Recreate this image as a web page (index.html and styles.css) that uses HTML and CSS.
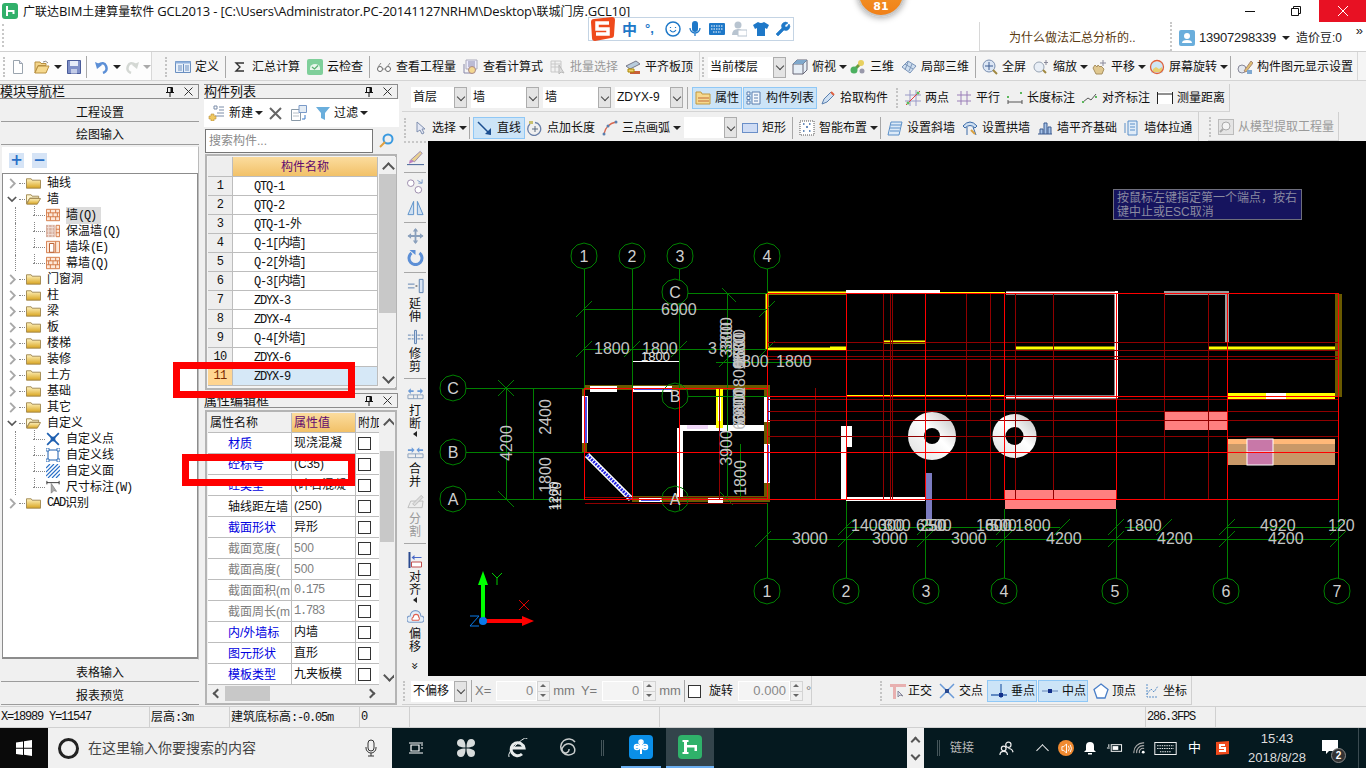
FILE: index.html
```html
<!DOCTYPE html>
<html lang="zh">
<head>
<meta charset="utf-8">
<title>广联达BIM土建算量软件 GCL2013</title>
<link rel="stylesheet" href="styles.css">
</head>
<body>
<svg class="sprite" width="0" height="0">
  <defs>
    <linearGradient id="fold" x1="0" y1="0" x2="0" y2="1"><stop offset="0" stop-color="#fff3c0"/><stop offset="1" stop-color="#d9a520"/></linearGradient>
    <linearGradient id="dn" x1="1" y1="0" x2="0" y2="1"><stop offset="0" stop-color="#bbb"/><stop offset=".45" stop-color="#fff"/><stop offset="1" stop-color="#ddd"/></linearGradient>
    <symbol id="chev" viewBox="0 0 10 12"><path d="M3 1l5 5-5 5" fill="none" stroke="#a8a8a8" stroke-width="2"/></symbol>
    <symbol id="chevd" viewBox="0 0 12 10"><path d="M1 2l5 5 5-5" fill="none" stroke="#555" stroke-width="2"/></symbol>
    <symbol id="folder" viewBox="0 0 16 12"><path d="M.5 1.5h5l1 1.5h9v8.500H.5z" fill="url(#fold)" stroke="#a08850"/></symbol>
    <symbol id="foldero" viewBox="0 0 16 12"><path d="M.5 1.500h5l1 1.500h7v2H4L.5 11z" fill="#fff6d0" stroke="#a08850"/><path d="M4 5.500h11.500L12 11.500H.8z" fill="url(#fold)" stroke="#a08850"/></symbol>
    <symbol id="brick" viewBox="0 0 16 14"><path d="M.5.500h15v13H.5z" fill="#fde8d8" stroke="#d0703a"/><path d="M1 4.500h14M1 9h14M5 1v3.500M11 1v3.500M8 4.500V9M3 4.500V9M13 4.500V9M5 9v4M11 9v4" stroke="#d0703a" fill="none"/></symbol>
    <symbol id="insul" viewBox="0 0 16 14"><path d="M0 0h10v14H0z" fill="#d8b0a0"/><path d="M1 3h8M1 7h8M1 11h8M3 0v14M7 0v14" stroke="#f0e0d8"/><path d="M11.500.500h4v13h-4zM11.500 5h4M11.500 9h4" stroke="#d0703a" fill="#fde8d8"/></symbol>
    <symbol id="pier" viewBox="0 0 16 14"><path d="M.5.500h15v13H.5z" fill="#fde8d8" stroke="#d0703a"/><path d="M4 3h5v10H4z" fill="#fff" stroke="#b05020"/><path d="M11 1v12" stroke="#d0703a"/></symbol>
    <symbol id="cpoint" viewBox="0 0 12 12"><path d="M1 1l10 10M11 1L1 11" stroke="#1d5fb0" stroke-width="1.500"/><rect x="4" y="4" width="4" height="4" fill="#1d5fb0"/></symbol>
    <symbol id="cline" viewBox="0 0 14 14"><path d="M2 2h10v10H2z" fill="none" stroke="#1d5fb0"/><path d="M0 0h3v3H0zM11 0h3v3h-3zM0 11h3v3H0zM11 11h3v3h-3z" fill="#fff" stroke="#1d5fb0" stroke-width=".8"/></symbol>
    <symbol id="cface" viewBox="0 0 14 14"><path d="M0 4l4-4M0 8l8-8M0 12L12 0M2 14L14 2M6 14l8-8M10 14l4-4" stroke="#2a70c8" stroke-width="1.200"/></symbol>
    <symbol id="cdim" viewBox="0 0 16 16"><path d="M1 1v4M15 1v4M1 3h14" stroke="#222"/><path d="M6 4v11l3-3 3 1z" fill="#aaa" stroke="#888"/></symbol>
    <symbol id="new" viewBox="0 0 16 16"><path d="M3.500 1.500h6l3 3v10h-9z" fill="#fff" stroke="#9aa4ae"/><path d="M9.500 1.500v3h3" fill="#dde" stroke="#9aa4ae"/></symbol>
    <symbol id="newc" viewBox="0 0 16 16"><path d="M6 1h3v3H6zM11 2h5M11 5h5M9 8h7M7 11h9" fill="none" stroke="#7a8ca8"/><path d="M3 9h3v2h2v3H6v2H3v-2H1v-3h2z" fill="#f0c860" stroke="#b89040" stroke-width=".6"/></symbol>
    <symbol id="copy" viewBox="0 0 16 16"><path d="M.5 4.500h9v11h-9z" fill="#fff" stroke="#8a9aa8"/><path d="M2 8h6M2 11h6" stroke="#b8c0c8"/><path d="M8 .5h7.500v7H8z" fill="#e4ecf4" stroke="#7a9ac8"/><path d="M14 10v4h-3" fill="none" stroke="#3a7ac8"/></symbol>
    <symbol id="open" viewBox="0 0 16 16"><path d="M1 3h5l1 1.500h5v2H4L1 14z" fill="#f3d48a" stroke="#b89040"/><path d="M4 7h11l-3 7H1z" fill="#f6d98e" stroke="#b89040"/><path d="M9 3q3-2 5 1" fill="none" stroke="#8a8a8a"/></symbol>
    <symbol id="save" viewBox="0 0 16 16"><path d="M1.500 1.500h13v13h-13z" fill="#7f90c8" stroke="#4a5c9a"/><path d="M4 2h8v5H4z" fill="#e6ecf8"/><path d="M5 10h6v4.500H5z" fill="#c4cde8"/></symbol>
    <symbol id="undo" viewBox="0 0 14 14"><path d="M3 5q6-4 8 1t-3 7" fill="none" stroke="#5c8fd6" stroke-width="2.500"/><path d="M0 2l2 7 5-4z" fill="#5c8fd6"/></symbol>
    <symbol id="redo" viewBox="0 0 14 14"><path d="M11 5Q5 1 3 6t3 7" fill="none" stroke="#d4d8d4" stroke-width="2.500"/><path d="M14 2l-2 7-5-4z" fill="#d4d8d4"/></symbol>
    <symbol id="def" viewBox="0 0 16 14"><path d="M.5 1.500h15v11H.5z" fill="#e8f0fa" stroke="#6a8fc0"/><path d="M.5 1.500h15v2H.5z" fill="#8fb0dc"/><path d="M3 6h4M3 8h4M3 10h4M10 6h4M10 8h4M10 10h4M8.500 4v8" stroke="#6a8fc0"/></symbol>
    <symbol id="sigma" viewBox="-2 -2 16 16"><path d="M10 2H2l4 4-4 4h8" fill="none" stroke="#333" stroke-width="1.400"/></symbol>
    <symbol id="cloud" viewBox="0 0 16 16"><rect width="16" height="16" rx="2" fill="#7fcf9a"/><path d="M3 9a5 4 0 0 1 10 0v2H3z" fill="#e8f6ec"/><path d="M5 8l2.500 2L11 6.500" fill="none" stroke="#5ab070" stroke-width="1.300"/></symbol>
    <symbol id="glasses" viewBox="0 0 16 12"><circle cx="4" cy="8" r="2.500" fill="#fff" stroke="#666"/><circle cx="12" cy="8" r="2.500" fill="#fff" stroke="#666"/><path d="M6 8h4M2 6l3-4M11 6l3-4" stroke="#888" fill="none"/></symbol>
    <symbol id="calc" viewBox="0 0 16 16"><path d="M3 1h11v9H3z" fill="#eef" stroke="#aab"/><path d="M5 3h7M5 5h7M5 7h7M1 5v9h8" stroke="#88a" fill="none"/><circle cx="9" cy="11" r="3.500" fill="#f4d890" stroke="#a88"/></symbol>
    <symbol id="batch" viewBox="0 0 16 16"><path d="M1 2h10v11H1zM1 5h10M1 8h10M5 2v11" fill="#f2f2f2" stroke="#c8c8c8"/><path d="M9 6v9l2-2 3 1z" fill="#ddd" stroke="#bbb"/></symbol>
    <symbol id="flat" viewBox="0 0 16 16"><path d="M1 7l10-5 4 3-10 5z" fill="#b8ccdc" stroke="#778"/><path d="M5 12h10v3H5z" fill="#c8603a"/><path d="M3 10h6v3H3z" fill="#f0d070" stroke="#a80"/></symbol>
    <symbol id="cube" viewBox="0 0 16 16"><path d="M1 5l4-4h10v10l-4 4H1z" fill="#e6eef6" stroke="#667"/><path d="M1 5h10v10M11 5l4-4" fill="none" stroke="#667"/><path d="M1 5l4-4h10l-4 4z" fill="#7fa8cc"/></symbol>
    <symbol id="v3d" viewBox="0 0 16 16"><path d="M2 13L12 3" stroke="#6a9a40" stroke-width="3"/><circle cx="4" cy="11" r="3.500" fill="#4cb060"/><circle cx="11" cy="4" r="3" fill="#e8d060"/><circle cx="12" cy="12" r="2.500" fill="#99a"/></symbol>
    <symbol id="local" viewBox="0 0 16 16"><path d="M1 8l6-6 8 5-6 7z" fill="#cfdff0" stroke="#7a94b8"/><path d="M4 5l8 5M7 3l-3 8M11 5l-3 7" stroke="#7a94b8" fill="none"/></symbol>
    <symbol id="full" viewBox="0 0 16 16"><circle cx="7" cy="7" r="6" fill="#dbe6f5" stroke="#7a8fb0"/><path d="M7 3v8M3 7h8" stroke="#3a5a90"/><path d="M11 11l4 4" stroke="#a08840" stroke-width="2"/></symbol>
    <symbol id="zoom" viewBox="0 0 16 16"><circle cx="6" cy="8" r="5" fill="#e8eef6" stroke="#98a4b4"/><path d="M10 11l3 3" stroke="#a08840" stroke-width="2"/><path d="M13 1v5M11 3.500h4" stroke="#889"/></symbol>
    <symbol id="pan" viewBox="0 0 16 16"><path d="M2 9l2-3 2 2 1-2 2 2 1-1 3 3-2 5H5z" fill="#e0c890" stroke="#a89060"/><path d="M12 1v6M9 4h6" stroke="#889"/></symbol>
    <symbol id="rot" viewBox="0 0 16 16"><path d="M2 3h12v11H2z" fill="#cfe6f4"/><path d="M4 10l3-2 3 2 3-2v5H4z" fill="#e8d070"/><circle cx="8" cy="8" r="6.500" fill="none" stroke="#e0603a" stroke-width="1.300"/></symbol>
    <symbol id="disp" viewBox="0 0 16 16"><circle cx="5" cy="10" r="4" fill="#e4e8ee" stroke="#889"/><path d="M7 12l7-10 2 2-7 9z" fill="#e0c070" stroke="#a87"/><path d="M10 11h5v4h-5z" fill="#7fa8d0"/></symbol>
    <symbol id="attr" viewBox="0 0 16 14"><path d="M1 1h5l1 2h8v10H1z" fill="#f6d98e" stroke="#c09840"/><path d="M3 7h11M3 10h11" stroke="#c06a3a"/></symbol>
    <symbol id="list" viewBox="0 0 16 14"><path d="M1 1h3v3H1zM1 5.500h3v3H1zM1 10h3v3H1z" fill="#fff" stroke="#5a7fae"/><path d="M6 1h8v12H6z" fill="#f4f8fc" stroke="#5a7fae"/><path d="M8 4h4M8 7h4M8 10h4" stroke="#5a7fae"/></symbol>
    <symbol id="pick" viewBox="0 0 16 16"><path d="M2 14l2-5 7-7 3 3-7 7z" fill="#cfe0f2" stroke="#5a7fae"/><path d="M11 2l3 3" stroke="#e06040" stroke-width="2"/></symbol>
    <symbol id="twop" viewBox="0 0 16 16"><path d="M5 0v16M11 0v16M0 5h16M0 11h16" stroke="#9a9ac8"/><path d="M1 15L15 1" stroke="#e04040"/><circle cx="3" cy="13" r="1.500" fill="#5cb85c"/><circle cx="13" cy="3" r="1.500" fill="#5cb85c"/></symbol>
    <symbol id="para" viewBox="0 0 16 16"><path d="M5 1v14M11 1v14M1 5h14M1 11h14" stroke="#9a7fb8"/></symbol>
    <symbol id="ldim" viewBox="0 0 16 14"><path d="M1 13V9M15 13V9M1 11h14" stroke="#555"/><rect x="0" y="5" width="2" height="2" fill="#5cb85c"/><rect x="13" y="1" width="2" height="2" fill="#5cb85c"/></symbol>
    <symbol id="adim" viewBox="0 0 16 14"><path d="M1 11l5-4 3 2 5-6" stroke="#555" fill="none"/><rect x="0" y="10" width="2" height="2" fill="#5cb85c"/><rect x="13" y="5" width="2" height="2" fill="#5cb85c"/></symbol>
    <symbol id="meas" viewBox="0 0 16 14"><path d="M0 1h16v12H0z" fill="#fff"/><path d="M.5 1v12M15.500 1v12M1 3h14" stroke="#222"/></symbol>
    <symbol id="cursor" viewBox="0 0 12 14"><path d="M2 1v10l3-2 2 4 2-1-2-4h3z" fill="#e4e8f4" stroke="#8090b0"/></symbol>
    <symbol id="line" viewBox="0 0 16 16"><path d="M1 2l12 12" stroke="#1d4f90" stroke-width="1.500"/><path d="M14 15V8l-6 6z" fill="#1d4f90"/></symbol>
    <symbol id="ptlen" viewBox="0 0 16 16"><path d="M3 4a6.500 6.500 0 1 0 5-1.500" fill="none" stroke="#6a80a8" stroke-width="1.300"/><path d="M8 6v6M5 9h6" stroke="#5a6a80"/><path d="M2 1h4v3H2z" fill="#c8c070"/></symbol>
    <symbol id="arc" viewBox="0 0 16 16"><path d="M2 14Q4 4 14 2" fill="none" stroke="#d86850" stroke-width="1.300"/><circle cx="2" cy="14" r="1.500" fill="#5a7fae"/><circle cx="6" cy="6" r="1.500" fill="#5a7fae"/><circle cx="14" cy="2" r="1.500" fill="#5a7fae"/></symbol>
    <symbol id="rect" viewBox="0 0 16 12"><rect x=".5" y="1.500" width="15" height="9" fill="#cfdcf4" stroke="#6a8fc8"/></symbol>
    <symbol id="smart" viewBox="0 0 16 16"><path d="M1 1h14v14H1z" fill="#fff" stroke="#555" stroke-dasharray="1 1"/><path d="M4 4h1.500M10 4h1.500M7 7h2M4 11h1.500M10 11h1.500" stroke="#3a6aa8" stroke-width="1.500"/></symbol>
    <symbol id="slope" viewBox="0 0 16 16"><path d="M4 2h11l-3 13H1z" fill="#dceaf8" stroke="#5a8fc8"/><path d="M4 5h10M3 8h10M3 11h9" stroke="#5a8fc8"/></symbol>
    <symbol id="archw" viewBox="0 0 16 16"><path d="M1 6Q8-2 15 6l-2 2Q8 3 3 8z" fill="#cfe0f2" stroke="#3a6aa8"/><path d="M5 7v8M11 7l3 8" stroke="#3a6aa8"/><path d="M9 10l4 4" stroke="#d8a040" stroke-width="2"/></symbol>
    <symbol id="align" viewBox="0 0 16 16"><path d="M1 14h14M3 14V9h3v5M7 14V3h3v11M11 14V7h3v7" fill="#a8c4e8" stroke="#3a5a90"/></symbol>
    <symbol id="pull" viewBox="0 0 16 16"><path d="M4 1h9v14H4z" fill="#e0ecf8" stroke="#5a8fc8"/><path d="M6 4h5M6 7h5M6 10h5M1 3v10" stroke="#5a8fc8"/></symbol>
    <symbol id="model" viewBox="0 0 16 16"><rect x=".5" y=".5" width="15" height="15" fill="#e4e4e4" stroke="#bbb"/><circle cx="8" cy="7" r="4" fill="#f4f4f4" stroke="#aaa"/><path d="M5 10l-3 3" stroke="#aaa" stroke-width="2"/></symbol>
    <symbol id="vbrush" viewBox="0 0 18 16"><path d="M4 10L14 1l2 2-8 9z" fill="#e8d090" stroke="#98a"/><path d="M3 10q3 0 4 2l-5 2z" fill="#c080c0"/><path d="M0 15h18" stroke="#3a5a90"/></symbol>
    <symbol id="vcirc" viewBox="0 0 18 16"><circle cx="4" cy="5" r="3.500" fill="#fff" stroke="#98a"/><circle cx="12" cy="12" r="3.500" fill="#fff" stroke="#98a"/><path d="M11 2l5 3M16 1v4h-4" stroke="#7a9ac8" fill="none"/></symbol>
    <symbol id="vmirror" viewBox="0 0 18 16"><path d="M7 1L1 15h6zM11 1l6 14h-6z" fill="#cfe0f2" stroke="#5a8fc8"/></symbol>
    <symbol id="vmove" viewBox="0 0 18 18"><path d="M9 1v16M1 9h16" stroke="#8aa0bc" stroke-width="2"/><path d="M9 0l3 4H6zM9 18l3-4H6zM0 9l4-3v6zM18 9l-4-3v6z" fill="#8aa0bc"/></symbol>
    <symbol id="vrot" viewBox="0 0 16 16"><path d="M4 3a6.500 6.500 0 1 0 8 0" fill="none" stroke="#5c8fd6" stroke-width="3"/><path d="M2 0h6v5z" fill="#5c8fd6"/></symbol>
    <symbol id="vext" viewBox="0 0 18 14"><path d="M1 5h7M1 9h7" stroke="#5a7fae"/><path d="M9 7h2" stroke="#222"/><path d="M13 0h4v14h-4z" fill="#dbe6f5" stroke="#5a7fae"/></symbol>
    <symbol id="vtrim" viewBox="0 0 18 14"><path d="M1 5h6M1 9h6M11 5h6M11 9h6" stroke="#5a7fae" stroke-dasharray="3 1"/><path d="M8 0h2v14H8z" fill="#dbe6f5" stroke="#5a7fae"/></symbol>
    <symbol id="vbreak" viewBox="0 0 18 14"><path d="M1 5l3-3v2h3v2H4v2zM17 5l-3-3v2h-3v2h3v2z" fill="#6a9ad8"/><path d="M1 9h16v4H1zM7 9v4M11 9v4" fill="none" stroke="#8aa0bc"/></symbol>
    <symbol id="vmerge" viewBox="0 0 18 14"><path d="M8 5L5 2v2H1v2h4v2zM10 5l3-3v2h4v2h-4v2z" fill="#6a9ad8"/><path d="M1 9h16v4H1zM9 9v4" fill="none" stroke="#8aa0bc"/></symbol>
    <symbol id="vsplit" viewBox="0 0 18 16"><path d="M1 14L4 7h13l-1 7z" fill="#eee" stroke="#bbb"/><path d="M6 10L15 1l2 2-9 9z" fill="#ddd" stroke="#bbb"/></symbol>
    <symbol id="valign" viewBox="0 0 16 16"><path d="M1 0h2v16H1z" fill="#2a4a90"/><path d="M4 10h10v5H4z" fill="#fff" stroke="#c05050"/><path d="M14 5H7V3L4 5.500 7 8V6h7z" fill="#4a6ac8"/></symbol>
    <symbol id="voff" viewBox="0 0 16 14"><path d="M3 12a3 3 0 0 1 0-6 5 5 0 0 1 10 0 3 3 0 0 1 0 6z" fill="#e4eef8" stroke="#7a9ac8"/><path d="M5 10a2 2 0 0 1 1-3 2.500 2.500 0 0 1 5 0 2 2 0 0 1 0 3z" fill="#fff" stroke="#e06050"/></symbol>
    <symbol id="ortho" viewBox="0 0 16 16"><path d="M0 1h16v3H6v12H3V4H0z" fill="#e8b0b0"/><path d="M8 8v6l2-2 3 1z" fill="#dde" stroke="#889"/></symbol>
    <symbol id="cross" viewBox="0 0 16 16"><path d="M1 1l14 14M15 1L1 15" stroke="#6a9ad8" stroke-width="1.500"/><rect x="6" y="6" width="4" height="4" fill="#2a4a90"/></symbol>
    <symbol id="perp" viewBox="0 0 16 16"><path d="M0 12h16M10 1v14" stroke="#3a6ab0" stroke-width="1.300"/><rect x="8" y="10" width="4" height="4" fill="#12308a"/></symbol>
    <symbol id="mid" viewBox="0 0 16 16"><path d="M0 8h16" stroke="#7a9ac8" stroke-width="1.300"/><rect x="6" y="6" width="4" height="4" fill="#12308a"/></symbol>
    <symbol id="vert" viewBox="0 0 16 16"><path d="M8 1l7 5.500-3 8.500H4L1 6.500z" fill="#fff" stroke="#4a7fc8" stroke-width="1.300"/></symbol>
    <symbol id="coord" viewBox="0 0 16 16"><path d="M4 1v13h11M4 11l4-5 3 3 4-6" fill="none" stroke="#5a8fc8" stroke-dasharray="2 1"/></symbol>
    <symbol id="pinx" viewBox="0 0 8 10"><path d="M1.500.500h5v5h-5zM0 5.500h8M4 6v4" fill="none" stroke="#111"/><path d="M4.500 1v4h2V1z" fill="#111"/></symbol>
    <symbol id="closex" viewBox="0 0 9 9"><path d="M.5.500l8 8M8.500.500l-8 8" stroke="#333"/></symbol>
  </defs>
</svg>

<header class="titlebar">
  <svg class="applogo" viewBox="0 0 16 16"><rect width="16" height="16" rx="3" fill="#31b06a"/><path d="M4 3h2v10H4zM6 7h6v2H6zM10.500 7h2v4h-2z" fill="#fff"/></svg>
  <span class="title"><span class="cj">广联达</span>BIM<span class="cj">土建算量软件</span> GCL2013 - [C:\Users\Administrator.PC-20141127NRHM\Desktop\<span class="cj">联城门房</span>.GCL10]</span>
  <div class="winbtns">
    <span class="wb"><span class="wmin"></span></span>
    <span class="wb"><svg class="wrest" viewBox="0 0 10 10"><path d="M.5 2.500h7v7h-7zM2.500 2.500v-2h7v7h-2" fill="none" stroke="#111"/></svg></span>
    <span class="wb wclose"><svg class="wrest" viewBox="0 0 10 10"><path d="M0 0l10 10M10 0L0 10" stroke="#fff"/></svg></span>
  </div>
</header>

<div class="menurow">
  <div class="menugrip"></div>
  <div class="newsbox">为什么做法汇总分析的..</div>
  <div class="userbox">
    <svg class="avatar" viewBox="0 0 16 16"><rect width="16" height="16" rx="2" fill="#6aaedc"/><circle cx="8" cy="6" r="3" fill="#fff"/><path d="M3 13q0-3 5-3t5 3z" fill="#fff"/></svg>
    <span class="usernum">13907298339</span><span class="caret"></span><span>造价豆:0</span>
    <span class="chevrons">»</span>
  </div>
</div>

<div class="tb1">
  <div class="tb1-a">
    <span class="grip"></span>
    <svg class="i16"><use href="#new"/></svg>
    <svg class="i16 open"><use href="#open"/></svg><span class="caret"></span>
    <svg class="i16"><use href="#save"/></svg>
    <span class="sep"></span>
    <svg class="i14"><use href="#undo"/></svg><span class="caret"></span>
    <svg class="i14"><use href="#redo"/></svg><span class="caret pale"></span>
  </div>
  <div class="tb1-b">
    <span class="grip"></span>
    <span class="ti"><svg class="i16"><use href="#def"/></svg>定义</span><span class="sep"></span>
    <span class="ti"><svg class="i16"><use href="#sigma"/></svg>汇总计算</span>
    <span class="ti"><svg class="i16"><use href="#cloud"/></svg>云检查</span><span class="sep"></span>
    <span class="ti"><svg class="i16"><use href="#glasses"/></svg>查看工程量</span>
    <span class="ti"><svg class="i16"><use href="#calc"/></svg>查看计算式</span>
    <span class="ti off"><svg class="i16"><use href="#batch"/></svg>批量选择</span>
    <span class="ti"><svg class="i16"><use href="#flat"/></svg>平齐板顶</span>
  </div>
  <div class="tb1-c">
    <span class="grip"></span>
    <span class="sel w78"><span class="selv">当前楼层</span><span class="selbtn"><span class="vee"></span></span></span>
    <span class="ti dd"><svg class="i16"><use href="#cube"/></svg>俯视<span class="caret"></span></span>
    <span class="ti"><svg class="i16"><use href="#v3d"/></svg>三维</span>
    <span class="ti"><svg class="i16"><use href="#local"/></svg>局部三维</span><span class="sep"></span>
    <span class="ti"><svg class="i16"><use href="#full"/></svg>全屏</span>
    <span class="ti dd"><svg class="i16"><use href="#zoom"/></svg>缩放<span class="caret"></span></span>
    <span class="ti dd"><svg class="i16"><use href="#pan"/></svg>平移<span class="caret"></span></span>
    <span class="ti dd"><svg class="i16"><use href="#rot"/></svg>屏幕旋转<span class="caret"></span></span><span class="sep"></span>
    <span class="ti"><svg class="i16"><use href="#disp"/></svg>构件图元显示设置</span>
  </div>
</div>

<main class="main">
  <aside class="nav">
    <div class="phead"><span class="ptitle">模块导航栏</span><svg class="pin"><use href="#pinx"/></svg><svg class="pclose"><use href="#closex"/></svg></div>
    <div class="navbtn">工程设置</div>
    <div class="navbtn">绘图输入</div>
    <div class="navbody">
      <div class="pm"><span class="pmb">+</span><span class="pmb">−</span></div>
      <div class="tree">
        <div class="tr"><svg class="chev"><use href="#chev"/></svg><span class="dots"></span><svg class="fld"><use href="#folder"/></svg>轴线</div>
        <div class="tr"><svg class="chev"><use href="#chevd"/></svg><span class="dots"></span><svg class="fld"><use href="#foldero"/></svg>墙</div>
        <div class="tc"><span class="dotsl"></span><svg class="ci"><use href="#brick"/></svg><span class="cellsel">墙<span class="mn">(Q)</span></span></div>
        <div class="tc"><span class="dotsl"></span><svg class="ci"><use href="#insul"/></svg><span>保温墙<span class="mn">(Q)</span></span></div>
        <div class="tc"><span class="dotsl"></span><svg class="ci"><use href="#pier"/></svg><span>墙垛<span class="mn">(E)</span></span></div>
        <div class="tc"><span class="dotsl"></span><svg class="ci"><use href="#brick"/></svg><span>幕墙<span class="mn">(Q)</span></span></div>
        <div class="tr"><svg class="chev"><use href="#chev"/></svg><span class="dots"></span><svg class="fld"><use href="#folder"/></svg>门窗洞</div>
        <div class="tr"><svg class="chev"><use href="#chev"/></svg><span class="dots"></span><svg class="fld"><use href="#folder"/></svg>柱</div>
        <div class="tr"><svg class="chev"><use href="#chev"/></svg><span class="dots"></span><svg class="fld"><use href="#folder"/></svg>梁</div>
        <div class="tr"><svg class="chev"><use href="#chev"/></svg><span class="dots"></span><svg class="fld"><use href="#folder"/></svg>板</div>
        <div class="tr"><svg class="chev"><use href="#chev"/></svg><span class="dots"></span><svg class="fld"><use href="#folder"/></svg>楼梯</div>
        <div class="tr"><svg class="chev"><use href="#chev"/></svg><span class="dots"></span><svg class="fld"><use href="#folder"/></svg>装修</div>
        <div class="tr"><svg class="chev"><use href="#chev"/></svg><span class="dots"></span><svg class="fld"><use href="#folder"/></svg>土方</div>
        <div class="tr"><svg class="chev"><use href="#chev"/></svg><span class="dots"></span><svg class="fld"><use href="#folder"/></svg>基础</div>
        <div class="tr"><svg class="chev"><use href="#chev"/></svg><span class="dots"></span><svg class="fld"><use href="#folder"/></svg>其它</div>
        <div class="tr"><svg class="chev"><use href="#chevd"/></svg><span class="dots"></span><svg class="fld"><use href="#foldero"/></svg>自定义</div>
        <div class="tc"><span class="dotsl"></span><svg class="ci"><use href="#cpoint"/></svg><span>自定义点</span></div>
        <div class="tc"><span class="dotsl"></span><svg class="ci"><use href="#cline"/></svg><span>自定义线</span></div>
        <div class="tc"><span class="dotsl"></span><svg class="ci"><use href="#cface"/></svg><span>自定义面</span></div>
        <div class="tc"><span class="dotsl"></span><svg class="ci"><use href="#cdim"/></svg><span>尺寸标注<span class="mn">(W)</span></span></div>
        <div class="tr"><svg class="chev"><use href="#chev"/></svg><span class="dots"></span><svg class="fld"><use href="#folder"/></svg><span class="mn">CAD</span>识别</div>
      </div>
    </div>
    <div class="navbtn">表格输入</div>
    <div class="navbtn">报表预览</div>
  </aside>

  <section class="side">
    <div class="phead"><span class="ptitle">构件列表</span><svg class="pin"><use href="#pinx"/></svg><svg class="pclose"><use href="#closex"/></svg></div>
    <div class="listbar">
      <svg class="i16"><use href="#newc"/></svg><span class="ltxt">新建</span><span class="caret"></span>
      <svg class="lx" viewBox="0 0 13 13"><path d="M1 1l11 11M12 1L1 12" stroke="#666" stroke-width="2"/></svg>
      <svg class="i16"><use href="#copy"/></svg>
      <svg class="i16 fun" viewBox="0 0 16 16"><path d="M1 2h14L10 8v7l-4-2V8z" fill="#6aaedc"/></svg><span class="ltxt">过滤</span><span class="caret"></span>
    </div>
    <div class="searchrow">
      <div class="search">搜索构件...</div>
      <svg class="sicon" viewBox="0 0 16 16"><circle cx="10" cy="6" r="4.500" fill="none" stroke="#3a9ae0" stroke-width="2"/><path d="M7 9l-5 5" stroke="#e0a040" stroke-width="2"/></svg>
    </div>
    <div class="gridbox lg">
      <div class="gcols">
        <div class="grow ghead"><span class="gnum"></span><span class="gname gh">构件名称</span></div>
        <div class="grow"><span class="gnum">1</span><span class="gname">QTQ-1</span></div>
        <div class="grow"><span class="gnum">2</span><span class="gname">QTQ-2</span></div>
        <div class="grow"><span class="gnum">3</span><span class="gname">QTQ-1-外</span></div>
        <div class="grow"><span class="gnum">4</span><span class="gname">Q-1[内墙]</span></div>
        <div class="grow"><span class="gnum">5</span><span class="gname">Q-2[外墙]</span></div>
        <div class="grow"><span class="gnum">6</span><span class="gname">Q-3[内墙]</span></div>
        <div class="grow"><span class="gnum">7</span><span class="gname">ZDYX-3</span></div>
        <div class="grow"><span class="gnum">8</span><span class="gname">ZDYX-4</span></div>
        <div class="grow"><span class="gnum">9</span><span class="gname">Q-4[外墙]</span></div>
        <div class="grow"><span class="gnum">10</span><span class="gname">ZDYX-6</span></div>
        <div class="grow gsel"><span class="gnum">11</span><span class="gname">ZDYX-9</span></div>
      </div>
      <div class="vscroll vs1"><span class="up"></span><span class="thumb"></span><span class="dn"></span></div>
    </div>
    <div class="phead ph2"><span class="ptitle">属性编辑框</span><svg class="pin"><use href="#pinx"/></svg><svg class="pclose"><use href="#closex"/></svg></div>
    <div class="propbox">
      <div class="proptop">
        <div class="pcols">
          <div class="prow phd"><span class="pn pnh">属性名称</span><span class="pv pvh">属性值</span><span class="pc pch">附加</span></div>
          <div class="prow"><span class="pn bl">材质</span><span class="pv">现浇混凝</span><span class="pc"><i></i></span></div>
          <div class="prow"><span class="pn bl">砼标号</span><span class="pv">(C35)</span><span class="pc"><i></i></span></div>
          <div class="prow"><span class="pn bl">砼类型</span><span class="pv">(碎石混凝</span><span class="pc"><i></i></span></div>
          <div class="prow"><span class="pn">轴线距左墙</span><span class="pv">(250)</span><span class="pc"><i></i></span></div>
          <div class="prow"><span class="pn bl">截面形状</span><span class="pv">异形</span><span class="pc"><i></i></span></div>
          <div class="prow"><span class="pn gy">截面宽度(</span><span class="pv gy">500</span><span class="pc"><i></i></span></div>
          <div class="prow"><span class="pn gy">截面高度(</span><span class="pv gy">500</span><span class="pc"><i></i></span></div>
          <div class="prow"><span class="pn gy">截面面积(m</span><span class="pv gy mono">0.175</span><span class="pc"><i></i></span></div>
          <div class="prow"><span class="pn gy">截面周长(m</span><span class="pv gy mono">1.783</span><span class="pc"><i></i></span></div>
          <div class="prow"><span class="pn bl">内/外墙标</span><span class="pv">内墙</span><span class="pc"><i></i></span></div>
          <div class="prow"><span class="pn bl">图元形状</span><span class="pv">直形</span><span class="pc"><i></i></span></div>
          <div class="prow"><span class="pn bl">模板类型</span><span class="pv">九夹板模</span><span class="pc"><i></i></span></div>
        </div>
        <div class="vscroll vs2"><span class="up"></span><span class="thumb"></span><span class="dn"></span></div>
      </div>
      <div class="hscroll"><span class="lf"></span><span class="hthumb"></span><span class="rt"></span></div>
    </div>
  </section>

  <section class="work">
    <div class="rowtb r2">
      <div class="r2a">
        <span class="sel w56"><span class="selv">首层</span><span class="selbtn"><span class="vee"></span></span></span>
        <span class="sel w68"><span class="selv">墙</span><span class="selbtn"><span class="vee"></span></span></span>
        <span class="sel w68"><span class="selv">墙</span><span class="selbtn"><span class="vee"></span></span></span>
        <span class="sel w68"><span class="selv">ZDYX-9</span><span class="selbtn"><span class="vee"></span></span></span>
        <span class="sep"></span>
        <span class="ti tog t50"><svg class="i16"><use href="#attr"/></svg>属性</span>
        <span class="ti tog t74"><svg class="i16"><use href="#list"/></svg>构件列表</span>
        <span class="ti pk"><svg class="i16"><use href="#pick"/></svg>拾取构件</span>
        <span class="grip gripm"></span>
        <span class="ti"><svg class="i16"><use href="#twop"/></svg>两点</span>
        <span class="ti"><svg class="i16"><use href="#para"/></svg>平行</span>
        <span class="ti"><svg class="i16"><use href="#ldim"/></svg>长度标注</span>
        <span class="ti"><svg class="i16"><use href="#adim"/></svg>对齐标注</span>
        <span class="ti"><svg class="i16"><use href="#meas"/></svg>测量距离</span>
      </div>
    </div>
    <div class="rowtb r3">
      <div class="r3a">
        <span class="grip"></span>
        <span class="ti dd sl"><svg class="i12"><use href="#cursor"/></svg>选择<span class="caret"></span></span><span class="sep"></span>
        <span class="ti tog t52"><svg class="i16"><use href="#line"/></svg>直线</span>
        <span class="ti"><svg class="i16"><use href="#ptlen"/></svg>点加长度</span>
        <span class="ti dd"><svg class="i16"><use href="#arc"/></svg>三点画弧<span class="caret"></span></span>
        <span class="sel w53"><span class="selv"></span><span class="selbtn"><span class="vee"></span></span></span>
        <span class="ti"><svg class="i16"><use href="#rect"/></svg>矩形</span><span class="sep"></span>
        <span class="ti dd"><svg class="i16"><use href="#smart"/></svg>智能布置<span class="caret"></span></span><span class="sep"></span>
        <span class="ti"><svg class="i16"><use href="#slope"/></svg>设置斜墙</span>
        <span class="ti"><svg class="i16"><use href="#archw"/></svg>设置拱墙</span>
        <span class="ti"><svg class="i16"><use href="#align"/></svg>墙平齐基础</span>
        <span class="ti"><svg class="i16"><use href="#pull"/></svg>墙体拉通</span>
      </div>
      <div class="r3b">
        <span class="grip"></span>
        <span class="ti off"><svg class="i16"><use href="#model"/></svg>从模型提取工程量</span>
      </div>
    </div>

    <div class="stage">
      <div class="vbar">
        <span class="vgrip"></span>
        <span class="vi"><svg class="iv"><use href="#vbrush"/></svg></span><span class="vsep"></span>
        <span class="vi"><svg class="iv"><use href="#vcirc"/></svg></span>
        <span class="vi"><svg class="iv"><use href="#vmirror"/></svg></span><span class="vsep"></span>
        <span class="vi"><svg class="iv"><use href="#vmove"/></svg></span>
        <span class="vi"><svg class="iv"><use href="#vrot"/></svg></span><span class="vsep"></span>
        <span class="vi"><svg class="iv"><use href="#vext"/></svg></span><span class="vt">延<br>伸</span>
        <span class="vi v20 m3"><svg class="iv"><use href="#vtrim"/></svg></span><span class="vt">修<br>剪</span><span class="vsep s8"></span>
        <span class="vi"><svg class="iv"><use href="#vbreak"/></svg></span><span class="vt">打<br>断</span><span class="varrow"></span>
        <span class="vi v20 m5"><svg class="iv"><use href="#vmerge"/></svg></span><span class="vt">合<br>并</span>
        <span class="vi v20 m3"><svg class="iv"><use href="#vsplit"/></svg></span><span class="vt off">分<br>割</span><span class="vsep s8"></span>
        <span class="vi v20 m3"><svg class="iv"><use href="#valign"/></svg></span><span class="vt">对<br>齐</span><span class="varrow"></span>
        <span class="vi v20 m4"><svg class="iv"><use href="#voff"/></svg></span><span class="vt">偏<br>移</span>
        <span class="vmore">»</span>
      </div>
      <svg class="cad" viewBox="428 141 938 535">
        <!-- fills -->
        <rect class="f-pk" x="1005" y="490" width="111" height="19"/>
        <rect class="f-pk" x="1164" y="412" width="63" height="18"/>
        <rect class="f-tan" x="1227" y="439" width="108" height="26"/>
        <rect class="f-or" x="1227" y="439" width="108" height="5"/>
        <rect class="f-pu" x="1247" y="439" width="26" height="26"/>
        <path class="w1" d="M1247 452h27"/>
        <rect class="f-bl" x="926" y="473" width="6" height="47"/>
        <circle cx="932" cy="436" r="24" fill="url(#dn)"/><circle cx="932" cy="436" r="8"/>
        <circle cx="1014.500" cy="436" r="22" fill="url(#dn)"/><circle cx="1014.500" cy="436" r="9"/>
        <!-- walls -->
        <path class="yel" d="M767 293V349M767 293H846M767 349H846M830 348H846M1015 348H1116M1208 348H1335M884 342H925"/>
        <path class="yt" d="M846 396H1005M940 293H1005"/>
        <rect class="f-w" x="846" y="290" width="94" height="4"/>
        <path class="wt" d="M1006 293H1116V397H1006"/>
        <rect class="f-w" x="1115" y="291" width="3" height="107"/>
        <path class="gr" d="M1164 293H1227V342"/>
        <rect class="f-ol" x="1335" y="294" width="7" height="103"/>
        <rect class="f-y" x="1227" y="393" width="108" height="6"/>
        <rect class="f-w" x="1266" y="393" width="20" height="6"/>
        <rect class="f-w" x="841" y="426" width="5" height="73"/>
        <rect class="f-w" x="846" y="426" width="6" height="21"/>
        <rect class="f-w" x="846" y="497" width="79" height="4"/>
        <rect class="f-ol" x="584" y="385" width="186" height="5"/>
        <rect class="f-ol" x="582" y="388" width="3" height="8"/>
        <rect class="f-ol" x="582" y="443" width="5" height="10"/>
        <rect class="f-ol" x="632" y="496" width="138" height="6"/>
        <rect class="f-ol" x="764" y="388" width="6" height="114"/>
        <rect class="f-w" x="590" y="386" width="27" height="6"/>
        <rect class="f-w" x="633" y="386" width="39" height="6"/>
        <rect class="f-w" x="582" y="396" width="6" height="47"/>
        <rect class="f-w" x="764" y="396" width="6" height="26"/>
        <rect class="f-w" x="764" y="444" width="6" height="39"/>
        <rect class="f-w" x="639" y="497" width="23" height="5"/>
        <rect class="f-w" x="708" y="497" width="15" height="6"/>
        <rect class="f-w" x="677" y="428" width="6" height="69"/>
        <rect class="f-w" x="680" y="425" width="84" height="6"/>
        <path class="pkl" d="M687 426H708M687 428H708"/>
        <rect class="f-y" x="716" y="389" width="7" height="39"/>
        <rect class="f-w" x="718" y="397" width="3" height="24"/>
        <path class="bluel" d="M634 389H672M586 397V443M768 397V421M768 445V482M641 500H660"/>
        <path class="hatch" d="M587 455L631 499"/>
        <path class="hatchb" d="M587 455L631 499"/>
        <path class="wthin" d="M632 388V361H679V388"/>
        <!-- green -->
        <path class="gl" d="M584 269V388M632 269V388M679 269V510M767 269V388M688 293H767M584 309H767M584 349H767M716 362H810M688 396H767M466 388H584M466 452H584M466 499H632M506 388V499M533 388V499M727 293V499M740 444V499M767 503V578M846 501V578M925 520V578M1004 509V578M1116 509V578M1227 499V578M1338 499V578M767 539H1338M846 527H1060M1125 527H1155M1227 527H1338"/>
        <path class="gl" d="M576 317l16-16M576 357l16-16M624 357l16-16M671 357l16-16M759 317l16-16M759 357l16-16M719 367l16-16M722 288l14 14M498 396l16-16M498 380l16 16M498 491l16 16M719 491l14 14M755 547l16-16M838 547l16-16M917 547l16-16M996 547l16-16M1108 547l16-16M1219 547l16-16M1330 547l16-16M838 535l16-16M917 535l16-16M996 535l16-16M1108 535l16-16M1219 535l16-16M1330 535l16-16M1054 535l16-16M1156 535l16-16"/>
        <!-- grid circles -->
        <polygon class="oct" points="584,243 591,245 596,250 597,256 596,262 591,267 584,269 577,267 572,262 571,256 572,250 577,245"/>
        <polygon class="oct" points="632,243 639,245 644,250 645,256 644,262 639,267 632,269 625,267 620,262 619,256 620,250 625,245"/>
        <polygon class="oct" points="680,243 687,245 692,250 693,256 692,262 687,267 680,269 673,267 668,262 667,256 668,250 673,245"/>
        <polygon class="oct" points="767,243 774,245 779,250 780,256 779,262 774,267 767,269 760,267 755,262 754,256 755,250 760,245"/>
        <polygon class="oct ob" points="675,279 682,281 687,286 688,292 687,298 682,303 675,305 668,303 663,298 662,292 663,286 668,281"/>
        <polygon class="oct" points="675,383 682,385 687,390 688,396 687,402 682,407 675,409 668,407 663,402 662,396 663,390 668,385"/>
        <polygon class="oct" points="675,486 682,488 687,493 688,499 687,505 682,510 675,512 668,510 663,505 662,499 663,493 668,488"/>
        <polygon class="oct" points="453,375 460,377 465,382 466,388 465,394 460,399 453,401 446,399 441,394 440,388 441,382 446,377"/>
        <polygon class="oct" points="453,439 460,441 465,446 466,452 465,458 460,463 453,465 446,463 441,458 440,452 441,446 446,441"/>
        <polygon class="oct" points="453,486 460,488 465,493 466,499 465,505 460,510 453,512 446,510 441,505 440,499 441,493 446,488"/>
        <polygon class="oct" points="767,578 774,580 779,585 780,591 779,597 774,602 767,604 760,602 755,597 754,591 755,585 760,580"/>
        <polygon class="oct" points="846,578 853,580 858,585 859,591 858,597 853,602 846,604 839,602 834,597 833,591 834,585 839,580"/>
        <polygon class="oct" points="926,578 933,580 938,585 939,591 938,597 933,602 926,604 919,602 914,597 913,591 914,585 919,580"/>
        <polygon class="oct" points="1004,578 1011,580 1016,585 1017,591 1016,597 1011,602 1004,604 997,602 992,597 991,591 992,585 997,580"/>
        <polygon class="oct" points="1115,578 1122,580 1127,585 1128,591 1127,597 1122,602 1115,604 1108,602 1103,597 1102,591 1103,585 1108,580"/>
        <polygon class="oct" points="1226,578 1233,580 1238,585 1239,591 1238,597 1233,602 1226,604 1219,602 1214,597 1213,591 1214,585 1219,580"/>
        <polygon class="oct" points="1337,578 1344,580 1349,585 1350,591 1349,597 1344,602 1337,604 1330,602 1325,597 1324,591 1325,585 1330,580"/>
        <!-- dark red & red grid -->
        <path class="dr" d="M883 293V499M890 293V499M892 293V499M966 293V499M990 293V499M1015 293V499M1053 293V499M1164 293V499M1208 293V499M767 342H1338M767 350H1338M767 356H1338M767 359H1338M767 399H1338M767 411H1338M767 420H1338M767 436H1338M719 388V499M815 388V499M584 497H767M585 503H767"/>
        <path class="rd" d="M584 388H767M584 388V499H846M632 388V499M679 388V499M767 293V499M767 293H1338V499H846M846 293V499M925 293V499M1004 293V499M1116 293V499M1227 293V499M767 396H1338M584 452H1338"/>
        <!-- dimensions -->
        <g class="dim">
          <text x="661" y="315">6900</text>
          <text x="594" y="354">1800</text><text x="642" y="354">1800</text>
          <text x="708" y="354">3</text><text x="776" y="367">1800</text>
          <text x="733" y="367">1800</text>
          <text class="dsm" x="641" y="361">1800</text>
          <text transform="rotate(-90 512 443)" x="512" y="443" text-anchor="middle">4200</text>
          <text transform="rotate(-90 551 417)" x="551" y="417" text-anchor="middle">2400</text>
          <text transform="rotate(-90 551 475)" x="551" y="475" text-anchor="middle">1800</text>
          <text class="dsm" transform="rotate(-90 561 496)" x="561" y="496" text-anchor="middle">1120</text>
          <text class="dsm" transform="rotate(-90 558 496)" x="558" y="496" text-anchor="middle">1200</text>
          <text transform="rotate(-90 732 335)" x="732" y="335" text-anchor="middle">3800</text>
          <text transform="rotate(-90 732 340)" x="732" y="340" text-anchor="middle">3300</text>
          <text transform="rotate(-90 745 347)" x="745" y="347" text-anchor="middle">1800</text>
          <text transform="rotate(-90 745 352)" x="745" y="352" text-anchor="middle">1880</text>
          <text transform="rotate(-90 745 350)" x="745" y="350" text-anchor="middle">1600</text>
          <text transform="rotate(-90 745 378)" x="745" y="378" text-anchor="middle">1800</text>
          <text transform="rotate(-90 745 405)" x="745" y="405" text-anchor="middle">6600</text>
          <text transform="rotate(-90 745 408)" x="745" y="408" text-anchor="middle">6900</text>
          <text transform="rotate(-90 745 412)" x="745" y="412" text-anchor="middle">6040</text>
          <text transform="rotate(-90 732 448)" x="732" y="448" text-anchor="middle">3900</text>
          <text transform="rotate(-90 746 478)" x="746" y="478" text-anchor="middle">1800</text>
          <text x="851" y="531">1400</text><text x="878" y="531">300</text><text x="884" y="531">300</text>
          <text x="916" y="531">6500</text><text x="920" y="531">250</text><text x="928" y="531">50</text>
          <text x="976" y="531">1800</text><text x="985" y="531">600</text><text x="990" y="531">500</text>
          <text x="1015" y="531">1800</text>
          <text x="1126" y="531">1800</text>
          <text x="1260" y="531">4920</text>
          <text x="1328" y="531">120</text>
          <text x="792" y="544">3000</text><text x="872" y="544">3000</text><text x="951" y="544">3000</text>
          <text x="1046" y="544">4200</text><text x="1157" y="544">4200</text><text x="1268" y="544">4200</text>
        </g>
        <g class="lab">
          <text x="584" y="262">1</text><text x="632" y="262">2</text><text x="680" y="262">3</text><text x="767" y="262">4</text>
          <text x="675" y="298">C</text><text x="675" y="402">B</text><text x="675" y="505">A</text>
          <text x="453" y="394">C</text><text x="453" y="458">B</text><text x="453" y="505">A</text>
          <text x="767" y="597">1</text><text x="846" y="597">2</text><text x="926" y="597">3</text><text x="1004" y="597">4</text><text x="1115" y="597">5</text><text x="1226" y="597">6</text><text x="1337" y="597">7</text>
        </g>
        <!-- axis -->
        <path class="axy" d="M483 621V580"/><path class="axyf" d="M483 571l5 14h-10z"/>
        <path class="axx" d="M483 621H524"/><path class="axxf" d="M534 621l-12 5v-10z"/>
        <circle class="axo" cx="483" cy="621" r="4"/>
        <path class="ly" d="M492 573l5 5 5-5M497 578v7"/>
        <path class="lx" d="M519 600l10 10M529 600l-10 10"/>
        <path class="lz" d="M470 616h9l-9 10h9"/>
      </svg>
      <div class="tip">按鼠标左键指定第一个端点，按右<br>键中止或ESC取消</div>
    </div>

    <div class="rowtb r4">
      <div class="r4a">
        <span class="grip"></span>
        <span class="sel w56"><span class="selv">不偏移</span><span class="selbtn"><span class="vee"></span></span></span>
        <span class="sep"></span>
        <span class="lbl">X=</span>
        <span class="spin"><span class="inp w41">0</span><span class="spb"><b></b><b></b></span></span>
        <span class="lbl">mm</span><span class="lbl ly2">Y=</span>
        <span class="spin"><span class="inp w41">0</span><span class="spb"><b></b><b></b></span></span>
        <span class="lbl">mm</span>
        <span class="sep"></span>
        <span class="cb"></span><span class="rottxt">旋转</span>
        <span class="spin"><span class="inp w52">0.000</span><span class="spb"><b></b><b></b></span></span>
        <span class="lbl">°</span>
      </div>
      <div class="r4b">
        <span class="grip"></span>
        <span class="ti"><svg class="i16"><use href="#ortho"/></svg>正交</span>
        <span class="ti"><svg class="i16"><use href="#cross"/></svg>交点</span>
        <span class="ti tog t50"><svg class="i16"><use href="#perp"/></svg>垂点</span>
        <span class="ti tog t50"><svg class="i16"><use href="#mid"/></svg>中点</span>
        <span class="ti vx"><svg class="i16"><use href="#vert"/></svg>顶点</span>
        <span class="ti"><svg class="i16"><use href="#coord"/></svg>坐标</span>
      </div>
    </div>
  </section>
</main>

<footer class="status">
  <span class="st s1 mono2">X=18989 Y=11547</span>
  <span class="st s2">层高<span class="mn">:3m</span></span>
  <span class="st s3">建筑底标高<span class="mn">:-0.05m</span></span>
  <span class="st s4 mono2">0</span>
  <span class="st s5"></span>
  <span class="st s6"></span>
  <span class="st s7 mono2">286.3FPS</span>
  <span class="st s8"></span>
</footer>

<div class="taskbar">
  <div class="start"><svg class="winlogo" viewBox="0 0 16 16"><path d="M0 2.500l7-1v6.300H0zM8 1.300L16 0v7.800H8zM0 8.700h7V15l-7-1zM8 8.700h8V16l-8-1.200z" fill="#fff"/></svg></div>
  <div class="tsearch">
    <span class="ring"></span>
    <span class="tstxt">在这里输入你要搜索的内容</span>
    <svg class="mic" viewBox="0 0 12 18"><rect x="3" y="1" width="6" height="11" rx="3" fill="none" stroke="#333"/><path d="M1 8v1a5 5 0 0 0 10 0V8M6 14v3M3 17h6" fill="none" stroke="#333"/></svg>
  </div>
  <div class="tapps">
    <span class="ta a1"><svg class="tai" viewBox="0 0 16 14"><path d="M1 2h14M1 12h14M3 4h8v6H3zM13 4h2M13 7h2" fill="none" stroke="#fff" stroke-width="1.200"/></svg></span>
    <span class="ta a2"><svg class="tab" viewBox="0 0 20 20"><path id="petal" d="M9.500 9.500C4 9.500 1 8 1 5S3 1 5 1c3 0 4.500 3 4.500 8.500z" fill="#d8dcdc"/><path d="M9.500 9.500C4 9.500 1 8 1 5S3 1 5 1c3 0 4.500 3 4.500 8.500z" fill="#d8dcdc" transform="rotate(90 10 10)"/><path d="M9.500 9.500C4 9.500 1 8 1 5S3 1 5 1c3 0 4.500 3 4.500 8.500z" fill="#d8dcdc" transform="rotate(180 10 10)"/><path d="M9.500 9.500C4 9.500 1 8 1 5S3 1 5 1c3 0 4.500 3 4.500 8.500z" fill="#d8dcdc" transform="rotate(270 10 10)"/></svg></span>
    <span class="ta a3"><svg class="tab" viewBox="0 0 20 20"><path d="M3 10h13a6.500 6.500 0 1 0-2 6" fill="none" stroke="#e8ecec" stroke-width="3"/><path d="M1 19Q-1 15 9 6t10-5" fill="none" stroke="#e8ecec"/></svg></span>
    <span class="ta a4"><svg class="tab" viewBox="0 0 20 20"><path d="M18 4A8 8 0 1 0 17 15 6 6 0 1 0 6 9a3.500 3.500 0 1 0 6 2" fill="none" stroke="#c8cccc" stroke-width="1.500"/></svg></span>
    <span class="tbar"></span>
    <span class="ta a5"><svg class="tax" viewBox="0 0 24 24"><rect width="24" height="24" rx="4" fill="#0a8fe8"/><path d="M12 5v14M5 12h14" stroke="#fff" stroke-width="2"/><circle cx="8" cy="12" r="2.500" fill="none" stroke="#fff" stroke-width="1.500"/><circle cx="16" cy="12" r="2.500" fill="none" stroke="#fff" stroke-width="1.500"/><circle cx="12" cy="7" r="2" fill="none" stroke="#fff" stroke-width="1.500"/></svg></span>
    <span class="ta a6"><svg class="tax" viewBox="0 0 24 24"><rect width="24" height="24" rx="4" fill="#2fb26a"/><path d="M6 5h3v14H6zM4.500 5h6v2h-6zM4.500 17h6v2h-6zM9 10h10v2.500H9zM16.500 10H19v6h-2.500z" fill="#fff"/></svg></span>
  </div>
  <div class="tscroll"><span class="tsu"></span><span class="tsd"></span></div>
  <span class="tbar tb2"></span>
  <span class="tlink">链接</span>
  <svg class="tper" viewBox="0 0 16 16"><circle cx="10" cy="4" r="2.800" fill="none" stroke="#eee" stroke-width="1.300"/><circle cx="5" cy="8" r="2.500" fill="none" stroke="#eee" stroke-width="1.300"/><path d="M1 15q0-4 4-4t4 4M10 8q4 0 5 4" fill="none" stroke="#eee" stroke-width="1.300"/></svg>
  <span class="tup"></span>
  <span class="tvol"><svg class="tvoli" viewBox="0 0 12 12"><path d="M1 4h2l3-3v10L3 8H1zM8 3q2 3 0 6M10 2q3 4 0 8" fill="none" stroke="#fff"/></svg></span>
  <svg class="tbell" viewBox="0 0 14 14"><path d="M7 1a4 4 0 0 0-4 4v4l-2 2h12l-2-2V5a4 4 0 0 0-4-4zM5 12h4v1.500H5z" fill="#fff"/></svg>
  <svg class="tbat" viewBox="0 0 18 12"><path d="M1 6h3M3 2v3" stroke="#fff"/><rect x="5.500" y="2.500" width="11" height="7" fill="none" stroke="#fff"/><rect x="7" y="4" width="6" height="4" fill="#fff"/></svg>
  <svg class="twifi" viewBox="0 0 14 14"><path d="M1 12A10 10 0 0 1 12 1M4 12a7 7 0 0 1 8-8M7 12a4 4 0 0 1 5-5" fill="none" stroke="#aaa" stroke-width="1.200"/><circle cx="11" cy="11" r="1.500" fill="#fff"/></svg>
  <svg class="tkbd" viewBox="0 0 24 14"><rect x=".5" y=".5" width="23" height="13" fill="none" stroke="#fff"/><path d="M3 4h18M3 7h18M6 10.500h12" stroke="#fff" stroke-dasharray="1.500 1" fill="none"/></svg>
  <span class="tzh">中</span>
  <svg class="tsg" viewBox="0 0 16 16"><path d="M2 2l13-1 0 13-13 1z" fill="#ef4a1c"/><path d="M11 5H6v3h5v3H5" fill="none" stroke="#fff" stroke-width="2"/></svg>
  <div class="tclock"><span>15:43</span><span>2018/8/28</span></div>
  <span class="tnote"><svg class="tnotei" viewBox="0 0 16 14"><path d="M0 0h16v11H7l-3 3v-3H0z" fill="#fff"/></svg><span class="tbadge">2</span></span>
  <span class="tedge"></span>
</div>

<div class="mark m1"></div>
<div class="mark m2"></div>
<div class="badge"><span>81</span></div>
<div class="sogou">
  <svg class="sg" viewBox="0 0 28 26"><path d="M3 6Q3 3 6 3L24 1Q27 1 27 4L26 19Q26 22 23 22L7 25Q4 25 4 22z" fill="#ef4a1c"/><path d="M21 7H9v6h11v5H8" fill="none" stroke="#fff" stroke-width="3.500"/></svg>
  <span class="sgzh">中</span><span class="sgd">°,</span>
  <svg class="sgi" viewBox="0 0 16 16"><circle cx="8" cy="8" r="7" fill="none" stroke="#1e78c8" stroke-width="1.500"/><path d="M5 9q3 4 6 0M5.500 6v1M10.500 6v1" fill="none" stroke="#1e78c8" stroke-width="1.200"/></svg>
  <svg class="sgi" viewBox="0 0 16 16"><rect x="5" y="0" width="6" height="11" rx="3" fill="#1e78c8"/><path d="M3 7a5 5 0 0 0 10 0M8 12v3" fill="none" stroke="#1e78c8" stroke-width="1.300"/></svg>
  <svg class="sgi" viewBox="0 0 16 16"><rect y="2" width="16" height="12" rx="1" fill="#1e78c8"/><path d="M2 5h12M2 8h12M4 11h8" stroke="#fff" stroke-dasharray="1.500 1"/></svg>
  <svg class="sgi" viewBox="0 0 16 16"><circle cx="7" cy="4" r="3.500" fill="#b8c4d0"/><path d="M1 14q0-6 6-6t6 6z" fill="#b8c4d0"/><rect x="7" y="9" width="9" height="6" fill="#fff" stroke="#b8c4d0"/></svg>
  <svg class="sgi" viewBox="0 0 16 16"><path d="M5 1L0 4l2 4 2-1v8h8V7l2 1 2-4-5-3q-3 2-6 0z" fill="#1e78c8"/></svg>
  <svg class="sgi" viewBox="0 0 16 16"><path d="M1 13l6-6a4 4 0 0 1 6-5l-3 2v2h2l2-3a4 4 0 0 1-5 6l-6 6z" fill="#1e78c8" stroke="#1e78c8" stroke-width=".6"/></svg>
</div>
</body>
</html>
```

FILE: styles.css
```css
* { box-sizing: border-box; }
html, body { margin: 0; padding: 0; }
body {
  position: relative;
  width: 1366px; height: 768px; overflow: hidden;
  display: flex; flex-direction: column;
  background: #f0f0f0;
  font: 12px/16px "Liberation Sans", "Noto Sans CJK SC", sans-serif;
  color: #111;
}
.sprite { position: absolute; }
svg { display: block; flex: none; overflow: hidden; }
.i16 { width: 16px; height: 16px; }
.i14 { width: 14px; height: 14px; }
.i12 { width: 12px; height: 14px; }
.mn { font: 12px/16px "Liberation Mono", monospace; letter-spacing: -1.200px; }

/* title */
.titlebar { height: 22px; background: #fff; display: flex; align-items: center; flex: none; }
.applogo { width: 16px; height: 16px; margin: 0 5px 0 2px; }
.title { font: 13px/20px "Open Sans", "Noto Sans CJK SC", sans-serif; color: #111; white-space: nowrap; letter-spacing: -.2px; }
.cj { font-size: 12px; letter-spacing: 0; }
.winbtns { margin-left: auto; display: flex; height: 22px; }
.wb { width: 46px; display: flex; align-items: center; justify-content: center; }
.wclose { background: #e81123; width: 47px; }
.wmin { width: 10px; height: 1px; background: #111; }
.wrest { width: 10px; height: 10px; }

.menurow { height: 30px; background: #fff; display: flex; border-bottom: 1px solid #d0d0d0; flex: none; }
.menugrip { width: 4px; margin: 2px 0 4px 2px; border-left: 2px dotted #c8c8c8; flex: none; }
.newsbox { margin-left: auto; width: 191px; border-left: 1px solid #d8d8d8; border-bottom: 1px solid #d8d8d8; padding: 8px 0 0 29px; color: #5a3a10; background: #fff; }
.userbox { width: 196px; border-left: 2px dotted #c8c8c8; display: flex; align-items: center; gap: 4px; padding: 2px 0 0 7px; position: relative; color: #222; }
.avatar { width: 16px; height: 16px; }
.usernum { font-size: 13px; letter-spacing: -.23px; }
.userbox .caret { margin: 0 2px; }
.chevrons { position: absolute; right: 3px; top: 2px; font-size: 13px; line-height: 14px; color: #222; }

.tb1 { height: 29px; display: flex; background: #f5f5f5; border-bottom: 1px solid #d4d4d4; flex: none; }
.tb1-a { width: 152px; display: flex; align-items: center; background: #fdfdfd; border-right: 1px solid #d8d8d8; padding: 1px 0 0 3px; gap: 4px; }
.tb1-a .open { margin-left: 4px; }
.tb1-a .sep { margin: 0 4px 0 0; }
.tb1-b { width: 547px; display: flex; align-items: center; gap: 7px; padding: 2px 0 0 13px; }
.tb1-c { flex: 1; display: flex; align-items: center; gap: 7px; border-left: 1px solid #d8d8d8; padding: 2px 0 0 2px; border-right: 1px solid #d8d8d8; margin-right: 8px; }
.grip { width: 3px; height: 20px; border-left: 2px dotted #c4c4c4; flex: none; }
.sep { width: 1px; height: 22px; background: #a8a8a8; flex: none; margin: 0 -1px; }
.ti { display: flex; align-items: center; gap: 4px; white-space: nowrap; flex: none; height: 22px; }
.dd { margin-right: -4px; }
.dd .caret { margin-left: -1px; }
.off { color: #9a9a9a; }
.caret { width: 0; height: 0; border: 4px solid transparent; border-top: 4px solid #222; border-bottom: 0; flex: none; }
.caret.pale { border-top-color: #aaa; }
.sel { display: inline-flex; height: 21px; background: #fff; flex: none; }
.selv { flex: 1; padding-left: 2px; line-height: 21px; white-space: nowrap; overflow: hidden; }
.selbtn { width: 13px; background: #e4e4e4; border: 1px solid #adadad; display: flex; align-items: center; justify-content: center; }
.vee { width: 6px; height: 6px; border-right: 1px solid #444; border-bottom: 1px solid #444; transform: translateY(-1px) rotate(45deg); }
.w78 { width: 78px; margin: 0 -1px 0 -4px; }
.w56 { width: 56px; } .w68 { width: 68px; }
.w53 { width: 53px; margin-right: -2px; }

/* main */
.main { flex: none; display: flex; padding-top: 3px; height: 625px; }
.nav { width: 200px; flex: none; display: flex; flex-direction: column; }
.phead { height: 15px; display: flex; align-items: center; border: 1px solid #8c8c8c; border-left: 0; background: #f0f0f0; font-size: 13px; line-height: 13px; margin-right: 1px; flex: none; }
.ptitle { flex: 1; white-space: nowrap; }
.pin { width: 8px; height: 10px; margin-right: 10px; }
.pclose { width: 9px; height: 9px; margin-right: 5px; }
.navbtn { height: 22px; margin: 0 1px 1px 1px; border-bottom: 1px solid #9c9c9c; text-align: center; line-height: 26px; background: #f0f0f0; flex: none; overflow: hidden; }
.navbtn:nth-child(2) { margin-top: 1px; }
.navbtn:nth-child(3) { line-height: 24px; }
.navbody { flex: 1; background: #fff; border: 1px solid #f0f0f0; border-right-color: #bbb; margin: 0 1px; display: flex; flex-direction: column; min-height: 0; }
.pm { height: 26px; display: flex; gap: 8px; padding: 6px 0 0 7px; flex: none; }
.pmb { width: 15px; height: 15px; background: #d6e4f6; color: #2a70c8; font: bold 15px/15px "DejaVu Sans", sans-serif; text-align: center; }
.tree { flex: 1; border: 1px solid #8c8c8c; border-bottom-width: 2px; background: #fff; padding-top: 1px; }
.tr { height: 16px; display: flex; align-items: center; line-height: 16px; white-space: nowrap; }
.chev { width: 10px; height: 11px; margin-left: 4px; }
.dots { width: 6px; border-top: 1px dotted #888; margin: 0 1px 0 2px; }
.fld { width: 15px; height: 12px; margin-right: 6px; }
.tc { height: 16px; display: flex; align-items: center; white-space: nowrap; padding-left: 30px; position: relative; }
.tc::before { content: ""; position: absolute; left: 12px; top: 0; bottom: 0; border-left: 1px dotted #888; }
.tc::after { content: ""; position: absolute; left: 31px; top: -1px; height: 9px; border-left: 1px dotted #888; }
.dotsl { width: 12px; border-top: 1px dotted #888; margin-right: 1px; }
.ci { width: 14px; height: 14px; margin-right: 6px; }
.cellsel { background: #dcdcdc; padding: 0 5px 0 0; }

.side { width: 195px; margin-left: 4px; flex: none; display: flex; flex-direction: column; }
.listbar { height: 28px; background: #fff; display: flex; align-items: center; gap: 2px; padding-left: 4px; flex: none; }
.ltxt { margin-left: 3px; }
.lx { width: 13px; height: 13px; margin: 0 7px 0 4px; }
.fun { margin: 0 -2px 0 6px; }
.searchrow { height: 27px; display: flex; align-items: center; gap: 5px; padding-left: 1px; flex: none; background: #efefef; }
.search { width: 168px; height: 24px; border: 1px solid #777; background: #fff; color: #8a8a8a; padding-left: 3px; line-height: 22px; }
.sicon { width: 16px; height: 16px; }
.gridbox { display: flex; height: 236px; margin: 0 2px 0 1px; border: 2px solid #b4b4b4; background: #f4f4f4; padding: 1px; flex: none; }
.gcols { width: 170px; flex: none; }
.grow { height: 19px; display: flex; border-bottom: 1px solid #bdbdbd; background: #fff; }
.ghead { height: 20px; }
.gnum { width: 25px; flex: none; background: #eee; border-right: 1px solid #bdbdbd; text-align: center; font: 12px/19px "Liberation Mono", monospace; letter-spacing: -.6px; }
.gname { flex: 1; padding-left: 21px; font: 12px/20px "Liberation Mono", "Noto Sans CJK SC", monospace; letter-spacing: -1.200px; border-right: 1px solid #bdbdbd; white-space: nowrap; overflow: hidden; }
.gh { padding: 0; text-align: center; color: #620a6e; font: 12px/20px "Liberation Sans", "Noto Sans CJK SC", sans-serif; letter-spacing: 0; background: linear-gradient(#fbdc9e, #f2c168); }
.gsel .gnum { background: #ffd591; color: #7a2a00; }
.gsel .gname { background: #d6e8f7; }
.vscroll { width: 17px; margin-left: 1px; background: #f0f0f0; display: flex; flex-direction: column; align-items: center; position: relative; flex: none; }
.up, .dn { height: 17px; width: 17px; position: relative; flex: none; }
.up::after, .dn::after { content: ""; position: absolute; left: 5px; width: 7px; height: 7px; border-left: 2px solid #555; border-top: 2px solid #555; }
.up::after { top: 7px; transform: rotate(45deg); }
.dn::after { top: 3px; transform: rotate(225deg); }
.thumb { width: 17px; background: #c8c8c8; flex: none; }
.vs1 .thumb { height: 139px; }
.vs1 .dn { margin-top: auto; }
.vs2 .thumb { height: 91px; margin-top: 21px; }
.vs2 .dn { margin-top: auto; }
.ph2 { margin-top: 3px; }
.propbox { height: 295px; margin: 2px 2px 0 1px; border: 2px solid #b4b4b4; background: #f0f0f0; padding: 1px 1px 0; display: flex; flex-direction: column; flex: none; }
.proptop { display: flex; height: 272px; overflow: hidden; flex: none; }
.pcols { width: 171px; flex: none; overflow: hidden; }
.prow { height: 21px; display: flex; border-bottom: 1px solid #bdbdbd; background: #fff; }
.phd { height: 20px; background: #f0f0f0; }
.pn { width: 84px; flex: none; padding-left: 20px; line-height: 23px; white-space: nowrap; overflow: hidden; border-right: 1px solid #bdbdbd; }
.pnh { padding-left: 2px; line-height: 21px; }
.pv { width: 64px; flex: none; padding-left: 2px; line-height: 20px; white-space: nowrap; overflow: hidden; border-right: 1px solid #bdbdbd; }
.pvh { background: linear-gradient(#fbdc9e, #f2c168); color: #620a6e; }
.pc { flex: 1; padding: 4px 0 0 2px; overflow: hidden; }
.pc i { display: block; width: 13px; height: 13px; border: 1px solid #333; background: #fff; }
.pch { padding: 0 0 0 2px; line-height: 20px; white-space: nowrap; }
.bl { color: #0000e0; }
.gy { color: #7e7e7e; }
.mono { font: 12px/20px "Liberation Mono", monospace; letter-spacing: -1.200px; }
.hscroll { height: 17px; display: flex; align-items: center; position: relative; margin-left: 2px; }
.lf, .rt { width: 7px; height: 7px; border-left: 2px solid #555; border-top: 2px solid #555; position: absolute; }
.lf { left: 4px; top: 5px; transform: rotate(-45deg); }
.rt { left: 157px; top: 5px; transform: rotate(135deg); }
.hthumb { width: 45px; height: 15px; background: #c8c8c8; margin-left: 15px; }

.work { flex: 1; min-width: 0; margin-left: 3px; margin-top: -3px; display: flex; flex-direction: column; position: relative; padding-top: 3px; }
.rowtb { flex: none; display: flex; }
.r2 { height: 28px; }
.r2a { width: 828px; height: 28px; display: flex; align-items: center; gap: 4px; padding-left: 9px; border-right: 1px solid #d0d0d0; border-bottom: 1px solid #d4d4d4; }
.r2a .sep { margin: 0; }
.r2a .ti { margin-left: 3px; }
.r2a .ti.tog { margin-left: 0; }
.r2a .tog + .tog { margin-left: -3px; }
.r2a .ti.pk { margin-left: -1px; }
.tog { background: #cce4f7; outline: 1px solid #90c8f6; outline-offset: -1px; padding-left: 3px; }
.t50 { width: 50px; } .t74 { width: 74px; }
.t52 { width: 52px; margin: 0 -5px 0 -3px; padding-left: 4px; }
.gripm { margin: 0 -1px 0 4px; }
.r3 { height: 29px; }
.r3a { width: 797px; display: flex; align-items: center; gap: 7px; padding: 2px 0 0 2px; border-right: 1px solid #d0d0d0; }
.sl { margin-left: 1px; gap: 5px; }
.sl .caret { margin-left: -2px; }
.r3b { margin-left: 9px; width: 131px; display: flex; align-items: center; gap: 6px; border-right: 1px solid #d0d0d0; border-bottom: 1px solid #d0d0d0; padding: 2px 0 0 1px; }
.stage { height: 535px; display: flex; position: relative; flex: none; }
.vbar { width: 26px; flex: none; display: flex; flex-direction: column; align-items: center; background: #f0f0f0; }
.vgrip { width: 22px; height: 6px; border-top: 2px dotted #c8c8c8; flex: none; }
.vi { height: 22px; display: flex; align-items: center; justify-content: center; flex: none; }
.v20 { height: 20px; }
.m3 { margin-top: 3px; } .m4 { margin-top: 4px; } .m5 { margin-top: 5px; }
.iv { width: 17px; height: 16px; }
.vsep { width: 22px; height: 6px; flex: none; position: relative; }
.vsep::after { content: ""; position: absolute; left: 0; right: 0; top: 3px; height: 1px; background: #a8a8a8; }
.s8 { height: 8px; }
.s8::after { top: 4px; }
.vt { line-height: 13px; margin-top: 1px; text-align: center; flex: none; }
.varrow { width: 0; height: 6px; border: 3px solid transparent; border-right: 4px solid #222; border-left: 0; flex: none; }
.vmore { margin-top: 5px; font: 13px/14px "DejaVu Sans", sans-serif; transform: rotate(90deg); flex: none; }
.cad { width: 938px; height: 535px; background: #000; flex: none; }
.tip { position: absolute; left: 711px; top: 48px; width: 189px; height: 31px; background: #16145e; border: 1px solid #6e6e7c; color: #8a8aa0; line-height: 14px; padding: 1px 3px 0; overflow: hidden; }

.f-pk { fill: #ff8080; } .f-tan { fill: #c89868; } .f-or { fill: #ffb878; } .f-pu { fill: #c878a8; stroke: #fff; }
.f-bl { fill: #7b7bc0; } .f-w { fill: #fff; } .f-ol { fill: #6a5a00; } .f-y { fill: #ff0; }
.w1 { stroke: #fff; fill: none; }
.yel { stroke: #ff0; stroke-width: 3; fill: none; }
.yt { stroke: #ff0; stroke-width: 2; fill: none; }
.wt { stroke: #fff; stroke-width: 3; fill: none; }
.gr { stroke: #9c9c9c; stroke-width: 4; fill: none; }
.pkl { stroke: #e0b0f0; fill: none; }
.bluel { stroke: #1010e0; stroke-width: 1.500; fill: none; }
.hatch { stroke: #fff; stroke-width: 6; fill: none; }
.hatchb { stroke: #2020e0; stroke-width: 3; stroke-dasharray: 2 1; fill: none; }
.wthin { stroke: #fff; fill: none; shape-rendering: crispEdges; }
.gl { stroke: #008000; fill: none; shape-rendering: crispEdges; }
.oct { fill: none; stroke: #008000; }
.ob { fill: #000; }
.dr { stroke: #900000; fill: none; shape-rendering: crispEdges; }
.rd { stroke: #f00; fill: none; shape-rendering: crispEdges; }
.dim { font: 16px "Liberation Sans", sans-serif; fill: #c4c4c4; }
.dsm { font-size: 13px; fill: #e0e0e0; }
.lab { font: 16px "Liberation Sans", sans-serif; fill: #d0d0d0; text-anchor: middle; }
.axy { stroke: #0f0; stroke-width: 4; }
.axyf { fill: #0f0; }
.axx { stroke: #f00; stroke-width: 4; }
.axxf { fill: #f00; }
.axo { fill: #0a7ae8; }
.ly { stroke: #0c0; fill: none; }
.cad .lx { stroke: #d00; fill: none; }
.lz { stroke: #0a7ae8; fill: none; }

.r4 { height: 29px; }
.r4a { width: 410px; display: flex; align-items: center; gap: 3px; padding: 2px 0 0 1px; border-right: 1px solid #d0d0d0; border-bottom: 1px solid #d0d0d0; }
.r4a .grip { margin-right: 2px; }
.r4a .sep { margin: 0; }
.r4a .sel { margin-right: 1px; }
.lbl { color: #7a7a7a; font-size: 13px; flex: none; }
.ly2 { margin-left: 3px; }
.spin { display: flex; height: 20px; margin-left: 2px; flex: none; }
.inp { background: #f4f4f4; border: 1px solid #fff; text-align: right; padding-right: 3px; color: #888; font-size: 13px; line-height: 18px; }
.w41 { width: 41px; } .w52 { width: 52px; }
.spb { width: 13px; display: flex; flex-direction: column; border: 1px solid #d4d4d4; }
.spb b { flex: 1; position: relative; }
.spb b::after { content: ""; position: absolute; left: 2px; top: 2px; border: 3px solid transparent; border-bottom: 3px solid #666; border-top: 0; }
.spb b + b::after { border-top: 3px solid #666; border-bottom: 0; }
.spb b + b { border-top: 1px solid #d4d4d4; }
.cb { width: 13px; height: 13px; border: 1px solid #333; background: #fff; flex: none; }
.rottxt { margin-left: 5px; flex: none; white-space: nowrap; }
.r4b { margin-left: 68px; width: 312px; display: flex; align-items: center; gap: 7px; padding-top: 2px; border-right: 1px solid #d0d0d0; border-bottom: 1px solid #d0d0d0; }
.r4b .grip + .ti { gap: 2px; }
.r4b .tog { margin-left: -3px; padding-left: 4px; }
.r4b .tog + .tog { margin-left: -6px; }
.r4b .vx { margin-left: -2px; gap: 3px; }

/* status */
.status { height: 22px; display: flex; border-top: 1px solid #d0d0d0; border-bottom: 1px solid #d0d0d0; background: #f0f0f0; flex: none; line-height: 20px; }
.st { border-right: 1px solid #d0d0d0; padding-left: 1px; white-space: nowrap; flex: none; overflow: hidden; }
.mono2 { font: 12px/20px "Liberation Mono", monospace; letter-spacing: -1.200px; }
.s1 { width: 150px; } .s2 { width: 80px; } .s3 { width: 130px; } .s4 { width: 50px; } .s5 { width: 250px; } .s6 { width: 486px; } .s7 { width: 70px; }
.st.s8 { border: 0; }

/* taskbar */
.taskbar { height: 40px; background: #05191f; display: flex; align-items: center; color: #e6e6e6; flex: none; position: relative; }
.start { width: 48px; height: 40px; background: #0a0a0a; display: flex; align-items: center; justify-content: center; flex: none; }
.winlogo { width: 16px; height: 16px; }
.tsearch { width: 344px; height: 40px; background: #f0f0f0; display: flex; align-items: center; padding-left: 10px; color: #444; flex: none; }
.ring { width: 21px; height: 21px; border: 3px solid #222; border-radius: 50%; flex: none; }
.tstxt { font-size: 14px; margin-left: 9px; }
.mic { width: 12px; height: 18px; margin-left: 109px; }
.tapps { display: flex; height: 40px; flex: none; }
.ta { display: flex; align-items: center; justify-content: center; flex: none; height: 40px; }
.a1 { width: 40px; padding-left: 8px; } .a2 { width: 40px; margin-left: 14px; } .a3 { width: 40px; margin-left: 12px; } .a4 { width: 40px; margin-left: 9px; }
.tai { width: 16px; height: 14px; }
.tab { width: 20px; height: 20px; }
.tbar { width: 3px; height: 16px; margin: 12px 0 0 14px; border-left: 1px solid #45555a; border-right: 1px solid #45555a; flex: none; }
.a5 { width: 40px; margin-left: 17px; border-bottom: 2px solid #6aaef0; }
.a6 { width: 48px; margin-left: 5px; background: #33444b; border-bottom: 2px solid #6aaef0; }
.tax { width: 24px; height: 24px; }
.tscroll { width: 17px; height: 40px; background: #f0f0f0; flex: none; position: relative; margin: 0 13px 0 193px; }
.tsu, .tsd { position: absolute; left: 5px; width: 7px; height: 7px; border-left: 2px solid #555; border-top: 2px solid #555; transform: rotate(45deg); top: 10px; }
.tsd { transform: rotate(225deg); top: 24px; }
.tb2 { margin: 0 10px 0 0; }
.tlink { color: #bbb; margin-right: 25px; flex: none; }
.tper { width: 15px; height: 15px; margin-right: 24px; }
.tup { width: 9px; height: 9px; border-left: 1.500px solid #eee; border-top: 1.500px solid #eee; transform: rotate(45deg); margin: 4px 11px 0 0; flex: none; }
.tvol { width: 16px; height: 16px; border-radius: 50%; background: #f08a30; display: flex; align-items: center; justify-content: center; margin-right: 9px; flex: none; }
.tvoli { width: 11px; height: 11px; }
.tbell { width: 14px; height: 14px; margin-right: 9px; }
.tbat { width: 17px; height: 12px; margin-right: 10px; }
.twifi { width: 13px; height: 13px; margin-right: 8px; }
.tkbd { width: 23px; height: 13px; margin-right: 11px; }
.tzh { font-size: 13px; color: #fff; margin-right: 13px; flex: none; }
.tsg { width: 16px; height: 16px; margin-right: 15px; }
.tclock { width: 64px; display: flex; flex-direction: column; align-items: center; font-size: 13px; line-height: 19px; color: #ddd; flex: none; margin-right: 13px; }
.tnote { position: relative; width: 22px; height: 24px; flex: none; }
.tnotei { width: 16px; height: 14px; margin-top: 4px; }
.tbadge { position: absolute; left: 9px; top: 12px; width: 15px; height: 15px; border-radius: 50%; background: #333; border: 1px solid #888; color: #fff; font: bold 10px/13px "Liberation Sans", sans-serif; text-align: center; }
.tedge { width: 1px; height: 40px; background: #3a4a50; margin-left: 14px; flex: none; }

/* overlays */
.mark { position: absolute; border: 7px solid #f00; }
.m1 { left: 173px; top: 362px; width: 182px; height: 36px; }
.m2 { left: 182px; top: 454px; width: 173px; height: 32px; }
.badge { position: absolute; left: 857px; top: -31px; width: 48px; height: 48px; border-radius: 50%; background: linear-gradient(#f5a030, #f08018); border: 2px solid #c8c8c8; box-shadow: 0 1px 6px rgba(0,0,0,.35); color: #fff; font: bold 11px/12px "DejaVu Sans", sans-serif; text-align: center; padding-top: 30px; }
.sogou { position: absolute; left: 588px; top: 17px; width: 206px; height: 24px; background: #fff; border: 1px solid #c4d4e4; display: flex; align-items: center; gap: 6px; }
.sg { width: 28px; height: 26px; margin-left: -1px; }
.sgzh { font: bold 15px/16px "Noto Sans CJK SC", sans-serif; color: #1e78c8; }
.sgd { font: bold 13px/10px "Liberation Sans", sans-serif; color: #1e78c8; width: 12px; margin: 0 2px; }
.sgi { width: 16px; height: 16px; }
```
